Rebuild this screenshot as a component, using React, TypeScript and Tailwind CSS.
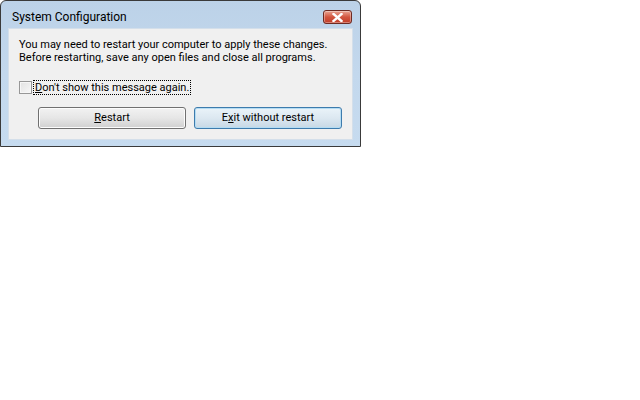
import React from 'react';

// Windows Vista "Basic" style message box: System Configuration
const CloseButton = () => (
  <div className="mt-[9px] w-[29px] h-[14px] rounded-[3px] border border-[#6d2a22] bg-gradient-to-b from-[#e8a493] via-[#d2553f] to-[#c13d28] flex items-center justify-center shadow-[inset_0_0_0_1px_rgba(255,255,255,0.35)]">
    <svg width="11" height="9" viewBox="0 0 11 9">
      <path d="M1.5 1 L9.5 8 M9.5 1 L1.5 8" stroke="#ffffff" strokeWidth="2.4" strokeLinecap="square" />
    </svg>
  </div>
);

const Button = ({ children, primary }: { children: React.ReactNode; primary?: boolean }) => (
  <div
    className={
      'w-[148px] h-[22px] pt-[1px] rounded-[3px] border flex items-center justify-center text-black ' +
      (primary
        ? 'border-[#3d7bad] bg-gradient-to-b from-[#eaf3f9] via-[#dce8f1] to-[#c7d8e5] shadow-[inset_0_0_0_1px_#b4dcf3]'
        : 'border-[#707070] bg-gradient-to-b from-[#f2f2f2] via-[#e6e6e6] to-[#d0d0d0] shadow-[inset_0_0_0_1px_#fcfcfc]')
    }
  >
    {children}
  </div>
);

export default function App() {
  return (
    <div className="w-[640px] h-[400px] bg-white" style={{ fontFamily: 'Roboto, "Liberation Sans", sans-serif' }}>
      <div className="w-[361px] h-[147px] border border-[#3a3a3a] rounded-t-[6px] bg-gradient-to-b from-[#bcd2e8] via-[#c3d8ed] to-[#c6dbef] flex flex-col">
        {/* title bar */}
        <div className="h-[27px] flex items-start justify-between pl-[11px] pr-[8px]">
          <span className="mt-[9px] text-[12px] leading-[15px] text-black">System Configuration</span>
          <CloseButton />
        </div>

        {/* content */}
        <div className="mx-[7px] h-[112px] bg-[#f0f0f0] border border-[#d4dfea] text-[11px] text-black whitespace-nowrap">
          <div className="pl-[10px] pt-[9px] leading-[13px]">
            <p>You may need to restart your computer to apply these changes.</p>
            <p>Before restarting, save any open files and close all programs.</p>
          </div>

          <div className="flex items-center h-[15px] pl-[10px] mt-[16px]">
            <div className="w-[13px] h-[13px] border border-[#979797] bg-gradient-to-br from-[#e2e2e2] to-[#f7f7f7] shadow-[inset_0_0_0_1px_#f6f6f6]" />
            <span className="ml-[1px] px-[1px] h-[15px] border border-dotted border-black leading-[13px]">
              <span className="underline">D</span>on't show this message again.
            </span>
          </div>

          <div className="flex gap-[8px] pl-[29px] mt-[12px]">
            <Button>
              <span><span className="underline">R</span>estart</span>
            </Button>
            <Button primary>
              <span>E<span className="underline">x</span>it without restart</span>
            </Button>
          </div>
        </div>
      </div>
    </div>
  );
}
